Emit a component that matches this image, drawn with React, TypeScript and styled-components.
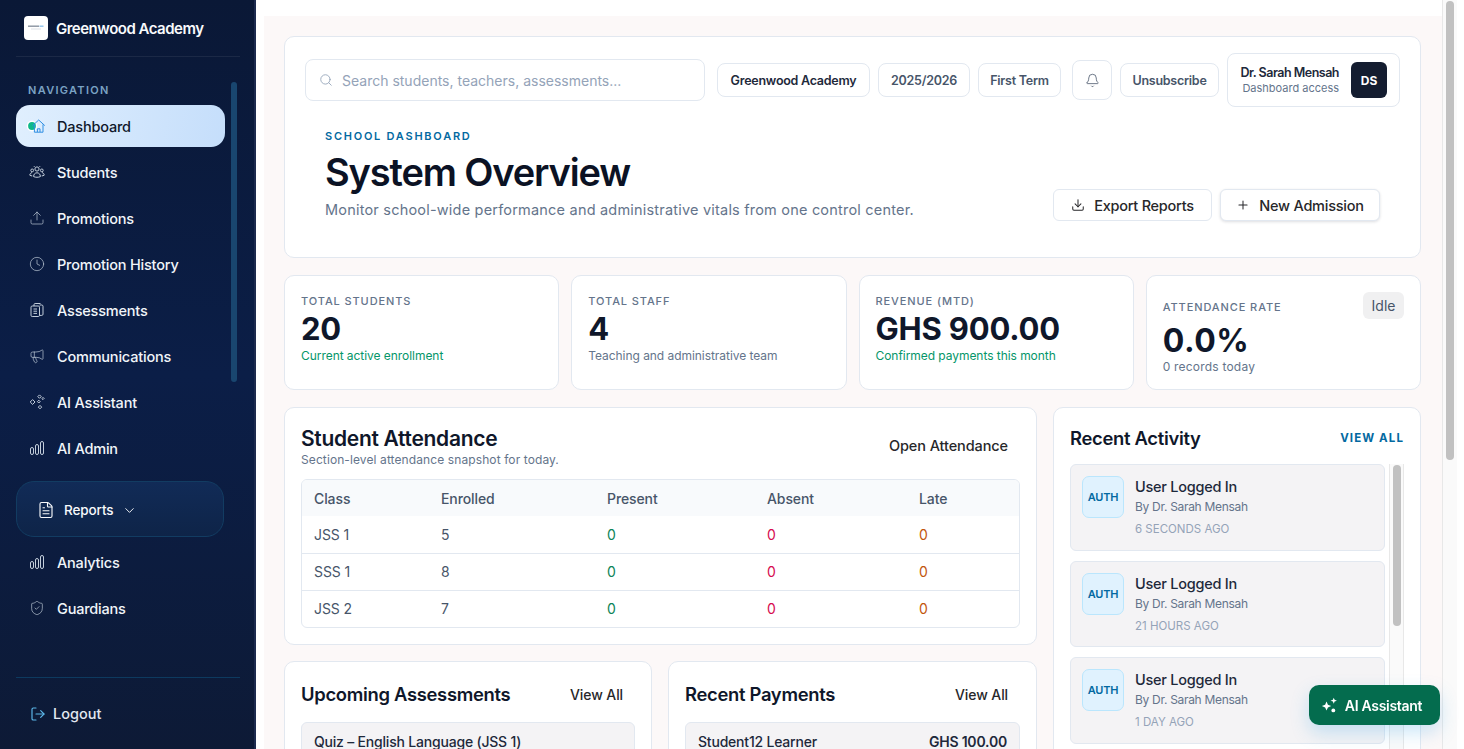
import React from "react";
import styled, { createGlobalStyle } from "styled-components";
import {
  Bell,
  ChevronDown,
  Clock,
  Download,
  FileText,
  LogOut,
  Megaphone,
  Plus,
  Search,
  ShieldCheck,
  Upload,
} from "lucide-react";

const GlobalStyle = createGlobalStyle`
  html, body, #root {
    margin: 0;
    height: 100%;
    background: #ffffff;
  }
  body {
    font-family: "Inter", "Liberation Sans", sans-serif;
    color: #0f172a;
    overflow: hidden;
  }
  * {
    box-sizing: border-box;
  }
`;

// small custom icons (lucide has nothing close for these)
const StudentsIcon = () => (
  <svg width="16" height="16" viewBox="0 0 16 16" fill="none" stroke="currentColor" strokeWidth="1">
    <circle cx="8" cy="5" r="2.1" />
    <circle cx="3.2" cy="6.4" r="1.4" />
    <circle cx="12.8" cy="6.4" r="1.4" />
    <path d="M4.6 12.6c0-2.4 1.5-3.8 3.4-3.8s3.4 1.4 3.4 3.8c-2 .9-4.8.9-6.8 0z" />
    <path d="M3 8.6c-1.3.3-2.2 1.2-2.2 2.6.7.5 1.6.7 2.5.7M13 8.6c1.3.3 2.2 1.2 2.2 2.6-.7.5-1.6.7-2.5.7" />
    <path d="M5 2.2 5.6 3M11 2.2 10.4 3" />
  </svg>
);

const BarsIcon = () => (
  <svg width="16" height="16" viewBox="0 0 16 16" fill="none" stroke="currentColor" strokeWidth="1">
    <rect x="1.5" y="7.5" width="3" height="7" rx="1.5" />
    <rect x="6.5" y="4.5" width="3" height="10" rx="1.5" />
    <rect x="11.5" y="1.5" width="3" height="13" rx="1.5" />
  </svg>
);

const AssessmentIcon = () => (
  <svg width="16" height="16" viewBox="0 0 16 16" fill="none" stroke="currentColor" strokeWidth="1">
    <rect x="2" y="4" width="8.5" height="10.5" rx="1.2" />
    <path d="M5 4V2.6c0-.6.5-1.1 1.1-1.1h5.4" />
    <path d="M10.5 3h2.3c.7 0 1.2.5 1.2 1.2v8c0 .7-.5 1.2-1.2 1.2h-2.3" />
    <path d="M4.5 7h3.5M4.5 9.2h3.5M4.5 11.4h3.5" />
  </svg>
);

const DiamondsIcon = () => (
  <svg width="16" height="16" viewBox="0 0 16 16" fill="none" stroke="currentColor" strokeWidth="1">
    <path d="M3.6 5.6 6 8 3.6 10.4 1.2 8z" />
    <path d="M10.5 .9 12.2 2.6l-1.7 1.7-1.7-1.7z" />
    <path d="M14 3.4l1.1 1.1L14 5.6l-1.1-1.1z" />
    <path d="M9.8 6.2l1.4 1.4-1.4 1.4-1.4-1.4z" />
    <path d="M11 11.4l1.7 1.7-1.7 1.7-1.7-1.7z" />
  </svg>
);

const FabSparkIcon = () => (
  <svg width="17" height="17" viewBox="0 0 16 16" fill="#ffffff">
    <path d="M5.2 4.2 6.5 7.2 9.6 8.5 6.5 9.8 5.2 12.8 3.9 9.8 .8 8.5 3.9 7.2z" />
    <path d="M12 .6 12.8 2.7 15 3.5 12.8 4.3 12 6.4 11.2 4.3 9 3.5 11.2 2.7z" />
    <circle cx="11.6" cy="12.6" r="1.8" />
  </svg>
);

const HomeBadgeIcon = () => (
  <svg width="20" height="18" viewBox="0 0 20 18" fill="none">
    <circle cx="6" cy="9" r="5.4" fill="#ffffff" />
    <circle cx="6" cy="9" r="3.9" fill="#0fb98a" />
    <path d="M6.6 8.6 12.7 3l6.1 5.6M8.4 7.4v7.8h8.6V7.4" stroke="#2f8fe3" strokeWidth="1" />
    <path d="M11.4 15v-3.2h2.6V15" stroke="#2f8fe3" strokeWidth="1" />
  </svg>
);

const LogoMark = () => (
  <svg width="18" height="8" viewBox="0 0 18 8">
    <rect x="1" y="1.5" width="11" height="1.4" fill="#8a93a0" />
    <rect x="12.5" y="1.5" width="4" height="1.4" fill="#8fc3ec" />
    <rect x="4" y="4.5" width="10" height="1" fill="#dde2e8" />
  </svg>
);

const navTop = [
  { label: "Students", icon: <StudentsIcon /> },
  { label: "Promotions", icon: <Upload size={16} strokeWidth={1} /> },
  { label: "Promotion History", icon: <Clock size={16} strokeWidth={1} /> },
  { label: "Assessments", icon: <AssessmentIcon /> },
  { label: "Communications", icon: <Megaphone size={16} strokeWidth={1} /> },
  { label: "AI Assistant", icon: <DiamondsIcon /> },
  { label: "AI Admin", icon: <BarsIcon /> },
];

const attendance = [
  { name: "JSS 1", enrolled: 5 },
  { name: "SSS 1", enrolled: 8 },
  { name: "JSS 2", enrolled: 7 },
];

const stats = [
  { label: "Total Students", value: "20", note: "Current active enrollment", good: true },
  { label: "Total Staff", value: "4", note: "Teaching and administrative team", good: false },
  { label: "Revenue (MTD)", value: "GHS 900.00", note: "Confirmed payments this month", good: true },
];

const activity = ["6 seconds ago", "21 hours ago", "1 day ago"];

export default function App() {
  return (
    <>
      <GlobalStyle />
      <Shell>
        <Sidebar>
          <Brand>
            <BrandLogo>
              <LogoMark />
            </BrandLogo>
            <BrandName>Greenwood Academy</BrandName>
          </Brand>
          <NavArea>
            <NavLabel>Navigation</NavLabel>
            <ActiveItem>
              <HomeBadgeIcon />
              Dashboard
            </ActiveItem>
            {navTop.map((item) => (
              <NavItem key={item.label}>
                <NavIcon>{item.icon}</NavIcon>
                {item.label}
              </NavItem>
            ))}
            <ReportsGroup>
              <FileText size={18} strokeWidth={1.5} />
              <span>Reports</span>
              <ChevronDown size={15} strokeWidth={1.5} />
            </ReportsGroup>
            <NavItem>
              <NavIcon>
                <BarsIcon />
              </NavIcon>
              Analytics
            </NavItem>
            <NavItem>
              <NavIcon>
                <ShieldCheck size={16} strokeWidth={1} />
              </NavIcon>
              Guardians
            </NavItem>
          </NavArea>
          <SidebarFoot>
            <LogoutRow>
              <LogOut size={16} strokeWidth={1.75} color="#5db8ea" />
              Logout
            </LogoutRow>
          </SidebarFoot>
        </Sidebar>

        <Main>
          <Content>
            <HeroCard>
              <Toolbar>
                <SearchBox>
                  <Search size={14} strokeWidth={1.5} color="#94a3b8" />
                  <SearchInput placeholder="Search students, teachers, assessments..." readOnly />
                </SearchBox>
                <Pill $w={153} $strong>
                  Greenwood Academy
                </Pill>
                <Pill $w={92}>2025/2026</Pill>
                <Pill $w={83}>First Term</Pill>
                <BellButton>
                  <Bell size={15} strokeWidth={1.25} />
                </BellButton>
                <Pill $w={99}>Unsubscribe</Pill>
                <UserBox>
                  <UserText>
                    <UserName>Dr. Sarah Mensah</UserName>
                    <UserRole>Dashboard access</UserRole>
                  </UserText>
                  <Avatar>DS</Avatar>
                </UserBox>
              </Toolbar>
              <HeroBody>
                <div>
                  <Eyebrow>School Dashboard</Eyebrow>
                  <PageTitle>System Overview</PageTitle>
                  <PageSub>Monitor school-wide performance and administrative vitals from one control center.</PageSub>
                </div>
                <HeroActions>
                  <ActionButton>
                    <Download size={14} strokeWidth={1.75} />
                    Export Reports
                  </ActionButton>
                  <ActionButton $raised>
                    <Plus size={14} strokeWidth={1.75} />
                    New Admission
                  </ActionButton>
                </HeroActions>
              </HeroBody>
            </HeroCard>

            <StatsGrid>
              {stats.map((s) => (
                <StatCard key={s.label}>
                  <StatLabel>{s.label}</StatLabel>
                  <StatValue>{s.value}</StatValue>
                  <StatNote $good={s.good}>{s.note}</StatNote>
                </StatCard>
              ))}
              <RateCard>
                <div>
                  <StatLabel>Attendance Rate</StatLabel>
                  <RateValue>0.0%</RateValue>
                  <RateNote>0 records today</RateNote>
                </div>
                <IdleBadge>Idle</IdleBadge>
              </RateCard>
            </StatsGrid>

            <SplitRow>
              <LeftColumn>
                <Panel>
                  <PanelHead>
                    <div>
                      <PanelTitle>Student Attendance</PanelTitle>
                      <PanelSub>Section-level attendance snapshot for today.</PanelSub>
                    </div>
                    <OpenButton>Open Attendance</OpenButton>
                  </PanelHead>
                  <TableWrap>
                    <AttendanceTable>
                      <thead>
                        <tr>
                          <HeadCell $w={127}>Class</HeadCell>
                          <HeadCell $w={166}>Enrolled</HeadCell>
                          <HeadCell $w={160}>Present</HeadCell>
                          <HeadCell $w={152}>Absent</HeadCell>
                          <HeadCell>Late</HeadCell>
                        </tr>
                      </thead>
                      <tbody>
                        {attendance.map((row) => (
                          <tr key={row.name}>
                            <BodyCell>{row.name}</BodyCell>
                            <BodyCell>{row.enrolled}</BodyCell>
                            <BodyCell $color="#0b8457">0</BodyCell>
                            <BodyCell $color="#d60b4f">0</BodyCell>
                            <BodyCell $color="#c2570c">0</BodyCell>
                          </tr>
                        ))}
                      </tbody>
                    </AttendanceTable>
                  </TableWrap>
                </Panel>

                <TwinRow>
                  <Panel>
                    <TwinHead>
                      <PanelTitle $small>Upcoming Assessments</PanelTitle>
                      <TextButton>View All</TextButton>
                    </TwinHead>
                    <ListRow>
                      <span>Quiz – English Language (JSS 1)</span>
                    </ListRow>
                  </Panel>
                  <Panel>
                    <TwinHead>
                      <PanelTitle $small>Recent Payments</PanelTitle>
                      <TextButton>View All</TextButton>
                    </TwinHead>
                    <ListRow>
                      <span>Student12 Learner</span>
                      <strong>GHS 100.00</strong>
                    </ListRow>
                  </Panel>
                </TwinRow>
              </LeftColumn>

              <ActivityPanel>
                <ActivityHead>
                  <PanelTitle $small>Recent Activity</PanelTitle>
                  <ViewAllLink>View All</ViewAllLink>
                </ActivityHead>
                <ActivityBody>
                  <ActivityList>
                    {activity.map((when) => (
                      <ActivityItem key={when}>
                        <AuthTag>AUTH</AuthTag>
                        <div>
                          <ActivityTitle>User Logged In</ActivityTitle>
                          <ActivityBy>By Dr. Sarah Mensah</ActivityBy>
                          <ActivityTime>{when}</ActivityTime>
                        </div>
                      </ActivityItem>
                    ))}
                  </ActivityList>
                  <ListRail>
                    <ListThumb />
                  </ListRail>
                </ActivityBody>
              </ActivityPanel>
            </SplitRow>
          </Content>
        </Main>

        <PageRail>
          <PageThumb />
        </PageRail>

        <AssistantFab>
          <FabSparkIcon />
          AI Assistant
        </AssistantFab>
      </Shell>
    </>
  );
}

const Shell = styled.div`
  display: flex;
  width: 1457px;
  height: 100vh;
  overflow: hidden;
  background: #ffffff;
`;

const Sidebar = styled.aside`
  width: 256px;
  flex-shrink: 0;
  display: flex;
  flex-direction: column;
  color: #f8fafc;
  border-right: 2px solid #1c2a4e;
  background: linear-gradient(180deg, #0a1836 0%, #0b1e47 50%, #0d1a36 100%);
`;

const Brand = styled.div`
  height: 57px;
  margin: 0 14px 0 16px;
  padding-left: 8px;
  display: flex;
  align-items: center;
  gap: 8px;
  border-bottom: 1px solid rgba(255, 255, 255, 0.07);
`;

const BrandLogo = styled.div`
  width: 24px;
  height: 24px;
  margin-top: -1px;
  border-radius: 4px;
  background: #ffffff;
  display: flex;
  align-items: center;
  justify-content: center;
`;

const BrandName = styled.span`
  font-size: 15px;
  font-weight: 600;
  letter-spacing: -0.5px;
`;

const NavArea = styled.nav`
  flex: 1;
  position: relative;
  padding: 25px 0 0 16px;

  &::after {
    content: "";
    position: absolute;
    left: 231px;
    top: 25px;
    width: 6px;
    height: 300px;
    border-radius: 3px;
    background: #19466f;
  }
`;

const NavLabel = styled.div`
  padding-left: 12px;
  height: 23px;
  font-size: 11px;
  font-weight: 600;
  letter-spacing: 1.3px;
  line-height: 16px;
  text-transform: uppercase;
  color: #7ba3c4;
`;

const ActiveItem = styled.div`
  width: 209px;
  height: 42px;
  padding-left: 10px;
  margin-bottom: 2px;
  display: flex;
  align-items: center;
  gap: 11px;
  border-radius: 14px;
  font-size: 14.5px;
  font-weight: 500;
  letter-spacing: -0.2px;
  color: #0f172a;
  background: linear-gradient(100deg, #e0effe 0%, #c5defb 100%);
`;

const NavItem = styled.div`
  width: 209px;
  height: 46px;
  padding-left: 13px;
  display: flex;
  align-items: center;
  gap: 12px;
  font-size: 14.5px;
  font-weight: 500;
  letter-spacing: -0.2px;
  color: #f1f5f9;
`;

const NavIcon = styled.span`
  display: flex;
  width: 16px;
  color: #c3cedb;
`;

const ReportsGroup = styled.div`
  width: 208px;
  height: 56px;
  margin: 10px 0 2px;
  padding: 2px 0 0 20px;
  display: flex;
  align-items: center;
  gap: 8px;
  font-size: 13.5px;
  font-weight: 500;
  letter-spacing: -0.1px;
  border: 1px solid #123c62;
  border-radius: 18px;
  background: linear-gradient(180deg, #112b57 0%, #0e2448 100%);

  > span {
    margin: 0 0 0 1px;
  }
`;

const SidebarFoot = styled.div`
  height: 72px;
  margin: 0 14px 0 16px;
  padding-left: 14px;
  display: flex;
  align-items: center;
  border-top: 1px solid #0d3a5f;
`;

const LogoutRow = styled.div`
  display: flex;
  align-items: center;
  gap: 7px;
  font-size: 14.5px;
  font-weight: 500;
  color: #e2e8f0;
`;

const Main = styled.main`
  flex: 1;
  min-width: 0;
  padding: 16px 0 0 8px;
  overflow: hidden;
  background: #ffffff;
`;

const PageRail = styled.div`
  width: 15px;
  flex-shrink: 0;
  padding: 1px 0 0 3px;
  background: #fafafa;
  border-left: 1px solid #e8e8e8;
`;

const PageThumb = styled.div`
  width: 8px;
  height: 459px;
  border-radius: 4px;
  background: #c1c1c1;
`;

const Content = styled.div`
  min-height: 100%;
  padding: 20px 21px 24px 20px;
  display: flex;
  flex-direction: column;
  gap: 17px;
  background: #fcf8f8;
`;

const HeroCard = styled.section`
  height: 222px;
  padding: 16px 20px;
  background: #ffffff;
  border: 1px solid #e2e8f0;
  border-radius: 10px;
`;

const Toolbar = styled.div`
  display: flex;
  align-items: center;
  gap: 8px;
`;

const SearchBox = styled.label`
  width: 400px;
  height: 42px;
  margin-right: 4px;
  padding-left: 13px;
  display: flex;
  align-items: center;
  gap: 9px;
  border: 1px solid #e2e8f0;
  border-radius: 8px;
`;

const SearchInput = styled.input`
  flex: 1;
  min-width: 0;
  padding: 0;
  border: none;
  outline: none;
  font: 400 14px "Inter", sans-serif;
  color: #0f172a;

  &::placeholder {
    color: #94a3b8;
  }
`;

const Pill = styled.div<{ $strong?: boolean; $w: number }>`
  width: ${(p) => p.$w}px;
  height: 34px;
  display: flex;
  align-items: center;
  justify-content: center;
  border: 1px solid #e2e8f0;
  border-radius: 8px;
  white-space: nowrap;
  font-size: 12.5px;
  font-weight: 600;
  letter-spacing: -0.25px;
  color: ${(p) => (p.$strong ? "#1e293b" : "#475569")};
`;

const BellButton = styled.div`
  width: 40px;
  height: 40px;
  margin-left: 3px;
  display: flex;
  align-items: center;
  justify-content: center;
  color: #475569;
  border: 1px solid #e2e8f0;
  border-radius: 8px;
`;

const UserBox = styled.div`
  width: 173px;
  height: 54px;
  padding: 0 12px;
  display: flex;
  align-items: center;
  justify-content: flex-end;
  gap: 12px;
  border: 1px solid #e2e8f0;
  border-radius: 8px;
`;

const UserText = styled.div`
  text-align: right;
`;

const UserName = styled.div`
  font-size: 12.5px;
  font-weight: 600;
  letter-spacing: -0.5px;
  line-height: 17px;
  white-space: nowrap;
  color: #1e293b;
`;

const UserRole = styled.div`
  font-size: 11px;
  line-height: 15px;
  white-space: nowrap;
  color: #64748b;
`;

const Avatar = styled.div`
  width: 36px;
  height: 36px;
  display: flex;
  align-items: center;
  justify-content: center;
  border-radius: 6px;
  background: #141d30;
  color: #ffffff;
  font-size: 12px;
  font-weight: 700;
`;

const HeroBody = styled.div`
  margin-top: 22px;
  padding: 0 20px;
  display: flex;
  align-items: flex-end;
  justify-content: space-between;
`;

const Eyebrow = styled.div`
  font-size: 11px;
  font-weight: 600;
  line-height: 14px;
  letter-spacing: 1.75px;
  text-transform: uppercase;
  color: #0369a1;
`;

const PageTitle = styled.h1`
  margin: 6px 0 4px;
  font-size: 38px;
  font-weight: 600;
  line-height: 46px;
  letter-spacing: -1.15px;
  color: #0b1224;
`;

const PageSub = styled.p`
  margin: 0;
  font-size: 14.5px;
  line-height: 22px;
  letter-spacing: 0.2px;
  color: #64748b;
`;

const HeroActions = styled.div`
  display: flex;
  gap: 8px;
`;

const ActionButton = styled.div<{ $raised?: boolean }>`
  width: ${(p) => (p.$raised ? "160px" : "159px")};
  height: 32px;
  display: flex;
  align-items: center;
  justify-content: center;
  gap: 9px;
  font-size: 14.5px;
  font-weight: 500;
  letter-spacing: -0.25px;
  color: #27272a;
  background: #ffffff;
  border: 1px solid #e2e8f0;
  border-radius: 6px;
  box-shadow: ${(p) => (p.$raised ? "0 1px 3px rgba(15, 23, 42, 0.14)" : "none")};
`;

const StatsGrid = styled.div`
  display: grid;
  grid-template-columns: repeat(4, 1fr);
  gap: 12px;
`;

const StatCard = styled.div`
  height: 115px;
  padding: 18px 16px;
  background: #ffffff;
  border: 1px solid #e2e8f0;
  border-radius: 10px;
`;

const RateCard = styled(StatCard)`
  display: flex;
  justify-content: space-between;
  align-items: flex-start;
  padding-top: 16px;

  > div:first-child {
    padding-top: 8px;
  }
`;

const StatLabel = styled.div`
  font-size: 11px;
  font-weight: 500;
  line-height: 14px;
  letter-spacing: 0.9px;
  text-transform: uppercase;
  color: #64748b;
`;

const StatValue = styled.div`
  margin-top: 3px;
  font-size: 31px;
  font-weight: 700;
  line-height: 36px;
  letter-spacing: -0.2px;
  color: #0f172a;
`;

const RateValue = styled(StatValue)`
  margin-top: 9px;
  font-size: 32px;
  letter-spacing: 0.5px;
`;

const StatNote = styled.div<{ $good?: boolean }>`
  margin-top: 1px;
  font-size: 12px;
  line-height: 16px;
  letter-spacing: -0.05px;
  color: ${(p) => (p.$good ? "#059669" : "#64748b")};
`;

const RateNote = styled(StatNote)`
  margin-top: 0;
  letter-spacing: 0.2px;
`;

const IdleBadge = styled.div`
  width: 41px;
  height: 27px;
  display: flex;
  align-items: center;
  justify-content: center;
  font-size: 14px;
  color: #475569;
  background: #f0f0f1;
  border-radius: 6px;
`;

const SplitRow = styled.div`
  display: grid;
  grid-template-columns: 1fr 368px;
  gap: 16px;
  align-items: start;
`;

const LeftColumn = styled.div`
  display: flex;
  flex-direction: column;
  gap: 16px;
`;

const Panel = styled.section`
  padding: 16px;
  background: #ffffff;
  border: 1px solid #e2e8f0;
  border-radius: 10px;
`;

const PanelHead = styled.div`
  display: flex;
  justify-content: space-between;
  align-items: center;
  margin-bottom: 11px;
`;

const PanelTitle = styled.h2<{ $small?: boolean }>`
  margin: ${(p) => (p.$small ? "0" : "1px 0 -1px")};
  font-size: ${(p) => (p.$small ? "18.4px" : "21px")};
  font-weight: 600;
  line-height: 28px;
  letter-spacing: -0.3px;
  color: #0f172a;
`;

const PanelSub = styled.div`
  font-size: 12px;
  line-height: 16px;
  letter-spacing: 0.1px;
  color: #64748b;
`;

const TextButton = styled.div`
  padding: 0 12px;
  font-size: 14px;
  font-weight: 500;
  letter-spacing: -0.1px;
  color: #27272a;
`;

const OpenButton = styled(TextButton)`
  margin-top: -2px;
  font-size: 14.5px;
`;

const TableWrap = styled.div`
  border: 1px solid #e2e8f0;
  border-radius: 6px;
  overflow: hidden;
`;

const AttendanceTable = styled.table`
  width: 100%;
  border-collapse: collapse;
  table-layout: fixed;

  tbody tr:first-child td {
    border-top: none;
  }
`;

const HeadCell = styled.th<{ $w?: number }>`
  width: ${(p) => (p.$w ? `${p.$w}px` : "auto")};
  height: 36px;
  padding: 0 0 0 12px;
  text-align: left;
  font-size: 14px;
  font-weight: 500;
  letter-spacing: -0.1px;
  color: #475569;
  background: #f8fafc;
`;

const BodyCell = styled.td<{ $color?: string }>`
  height: 37px;
  padding: 0 0 0 12px;
  font-size: 14px;
  letter-spacing: -0.1px;
  color: ${(p) => p.$color || "#475569"};
  border-top: 1px solid #e2e8f0;
`;

const TwinRow = styled.div`
  display: grid;
  grid-template-columns: 368px 1fr;
  gap: 16px;
`;

const TwinHead = styled.div`
  display: flex;
  justify-content: space-between;
  align-items: center;
  margin: 2px 0 14px;
`;

const ListRow = styled.div`
  height: 62px;
  padding: 10px 12px;
  margin-bottom: 10px;
  display: flex;
  justify-content: space-between;
  font-size: 14px;
  font-weight: 500;
  letter-spacing: -0.2px;
  color: #1e293b;
  background: #f4f3f5;
  border: 1px solid #e2e8f0;
  border-radius: 6px;

  > strong {
    font-weight: 600;
  }
`;

const ActivityPanel = styled(Panel)`
  padding-bottom: 18px;
`;

const ActivityHead = styled.div`
  display: flex;
  justify-content: space-between;
  align-items: center;
  margin-bottom: 12px;
`;

const ViewAllLink = styled.div`
  font-size: 11.5px;
  font-weight: 700;
  letter-spacing: 1.1px;
  text-transform: uppercase;
  color: #0369a1;
`;

const ActivityBody = styled.div`
  height: 326px;
  display: flex;
  gap: 4px;
`;

const ActivityList = styled.div`
  flex: 1;
  min-width: 0;
  display: flex;
  flex-direction: column;
  gap: 10px;
`;

const ListRail = styled.div`
  width: 15px;
  flex-shrink: 0;
  padding: 1px 0 0 3px;
  background: #fafafa;
  border-left: 1px solid #e8e8e8;
  border-right: 1px solid #e8e8e8;
`;

const ListThumb = styled.div`
  width: 8px;
  height: 161px;
  border-radius: 4px;
  background: #c1c1c1;
`;

const ActivityItem = styled.div`
  flex-shrink: 0;
  height: 86.5px;
  padding: 11px;
  display: flex;
  gap: 11px;
  background: #f4f3f5;
  border: 1px solid #e2e8f0;
  border-radius: 6px;
`;

const AuthTag = styled.div`
  width: 42px;
  height: 42px;
  flex-shrink: 0;
  display: flex;
  align-items: center;
  justify-content: center;
  font-size: 11px;
  font-weight: 600;
  letter-spacing: -0.2px;
  color: #0369a1;
  background: #e0f2fe;
  border: 1px solid #bae6fd;
  border-radius: 7px;
`;

const ActivityTitle = styled.div`
  font-size: 14.5px;
  font-weight: 500;
  line-height: 21px;
  letter-spacing: -0.25px;
  color: #1e293b;
`;

const ActivityBy = styled.div`
  font-size: 12px;
  line-height: 20px;
  letter-spacing: -0.3px;
  color: #64748b;
`;

const ActivityTime = styled.div`
  margin-top: 2px;
  font-size: 11.5px;
  line-height: 20px;
  text-transform: uppercase;
  color: #94a3b8;
`;

const AssistantFab = styled.button`
  position: fixed;
  left: 1309px;
  top: 685px;
  width: 131px;
  height: 40px;
  display: flex;
  align-items: center;
  justify-content: center;
  gap: 7px;
  padding: 0 6px 0 0;
  border: none;
  border-radius: 10px;
  font: 600 14px "Inter", sans-serif;
  letter-spacing: -0.3px;
  color: #ffffff;
  background: #046c4e;
  box-shadow: 0 8px 18px rgba(56, 165, 230, 0.25);
`;
